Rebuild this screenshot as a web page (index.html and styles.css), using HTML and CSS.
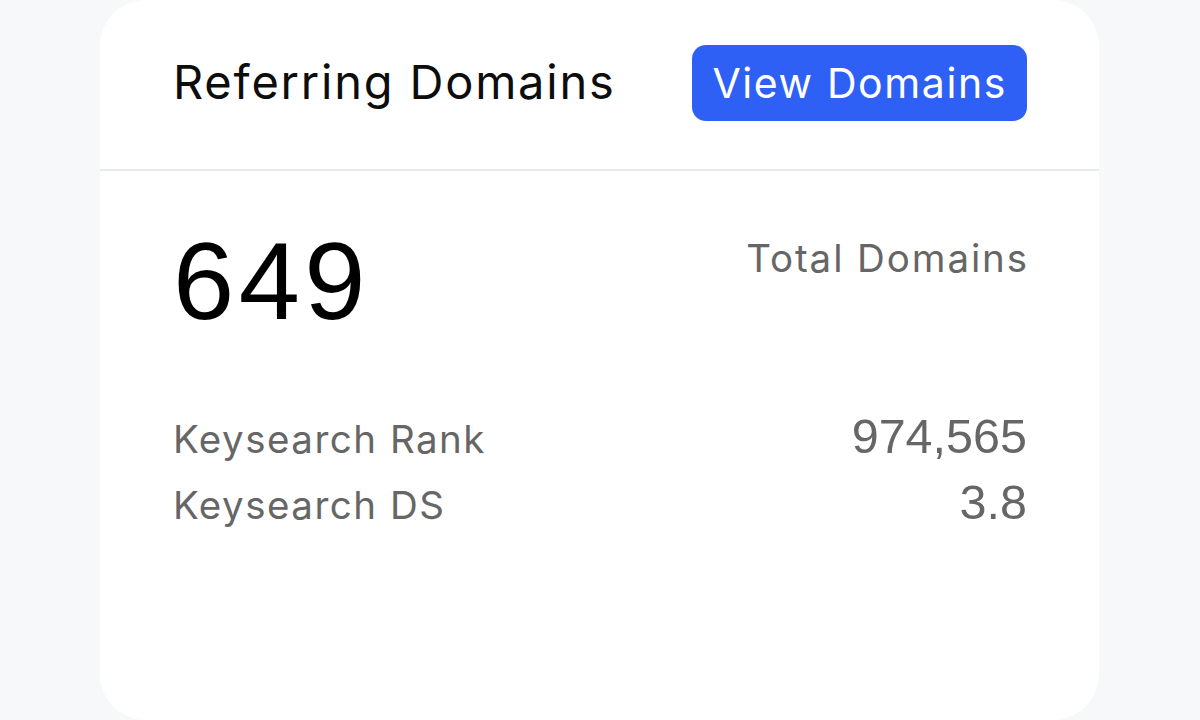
FILE: index.html
```html
<!DOCTYPE html>
<html lang="en">
<head>
<meta charset="utf-8">
<title>Referring Domains</title>
<link rel="stylesheet" href="styles.css">
</head>
<body>
<main class="page">
  <section class="card">
    <header class="card-header">
      <h2 class="card-title">Referring Domains</h2>
      <a class="btn-primary" href="#">View Domains</a>
    </header>
    <div class="card-body">
      <div class="total-row">
        <div class="total-value">649</div>
        <div class="total-label">Total Domains</div>
      </div>
      <dl class="stats">
        <div class="stat-row">
          <dt class="stat-label">Keysearch Rank</dt>
          <dd class="stat-value">974,565</dd>
        </div>
        <div class="stat-row">
          <dt class="stat-label">Keysearch DS</dt>
          <dd class="stat-value">3.8</dd>
        </div>
      </dl>
    </div>
  </section>
</main>
</body>
</html>
```

FILE: styles.css
```css
html, body {
  margin: 0;
  padding: 0;
  height: 100%;
}
body {
  background: #f7f8fa;
  font-family: Inter, "Noto Sans", sans-serif;
  overflow: hidden;
}
.page {
  padding: 0 101px 0 100px;
  height: 720px;
  box-sizing: border-box;
}
.card {
  background: #ffffff;
  border-radius: 46px;
  height: 720px;
  box-sizing: border-box;
}
.card-header {
  display: flex;
  justify-content: space-between;
  align-items: center;
  padding: 45px 72px 48px 73px;
  border-bottom: 2px solid #e9eaec;
}
.card-title {
  margin: 0;
  font-weight: 400;
  font-size: 47px;
  line-height: 1;
  color: #0d0d0d;
  letter-spacing: 1.8px;
  position: relative;
  top: -2px;
}
.btn-primary {
  display: flex;
  align-items: center;
  height: 76px;
  padding: 0 20px 0 20px;
  box-sizing: border-box;
  background: #2e60f5;
  color: #ffffff;
  border-radius: 14px;
  text-decoration: none;
  font-size: 41px;
  line-height: 1;
  letter-spacing: 1.6px;
}
.card-body {
  padding: 55px 72px 0 73px;
}
.total-row {
  display: flex;
  justify-content: space-between;
  align-items: flex-start;
}
.total-value {
  font-family: "Liberation Sans", Arial, sans-serif;
  font-size: 110px;
  line-height: 1;
  color: #000000;
  letter-spacing: 4.5px;
}
.total-label {
  margin-top: 13px;
  margin-right: -2px;
  font-size: 38.5px;
  line-height: 1;
  color: #666666;
  letter-spacing: 1.9px;
}
.stats {
  margin: 69px 0 0 0;
}
.stat-row {
  display: flex;
  justify-content: space-between;
  align-items: baseline;
  line-height: 63px;
}
.stat-label {
  font-size: 38.5px;
  color: #666666;
  letter-spacing: 1.5px;
}
.stat-value {
  margin: 0;
  font-family: "Liberation Sans", Arial, sans-serif;
  font-size: 48.5px;
  color: #666666;
}
```
